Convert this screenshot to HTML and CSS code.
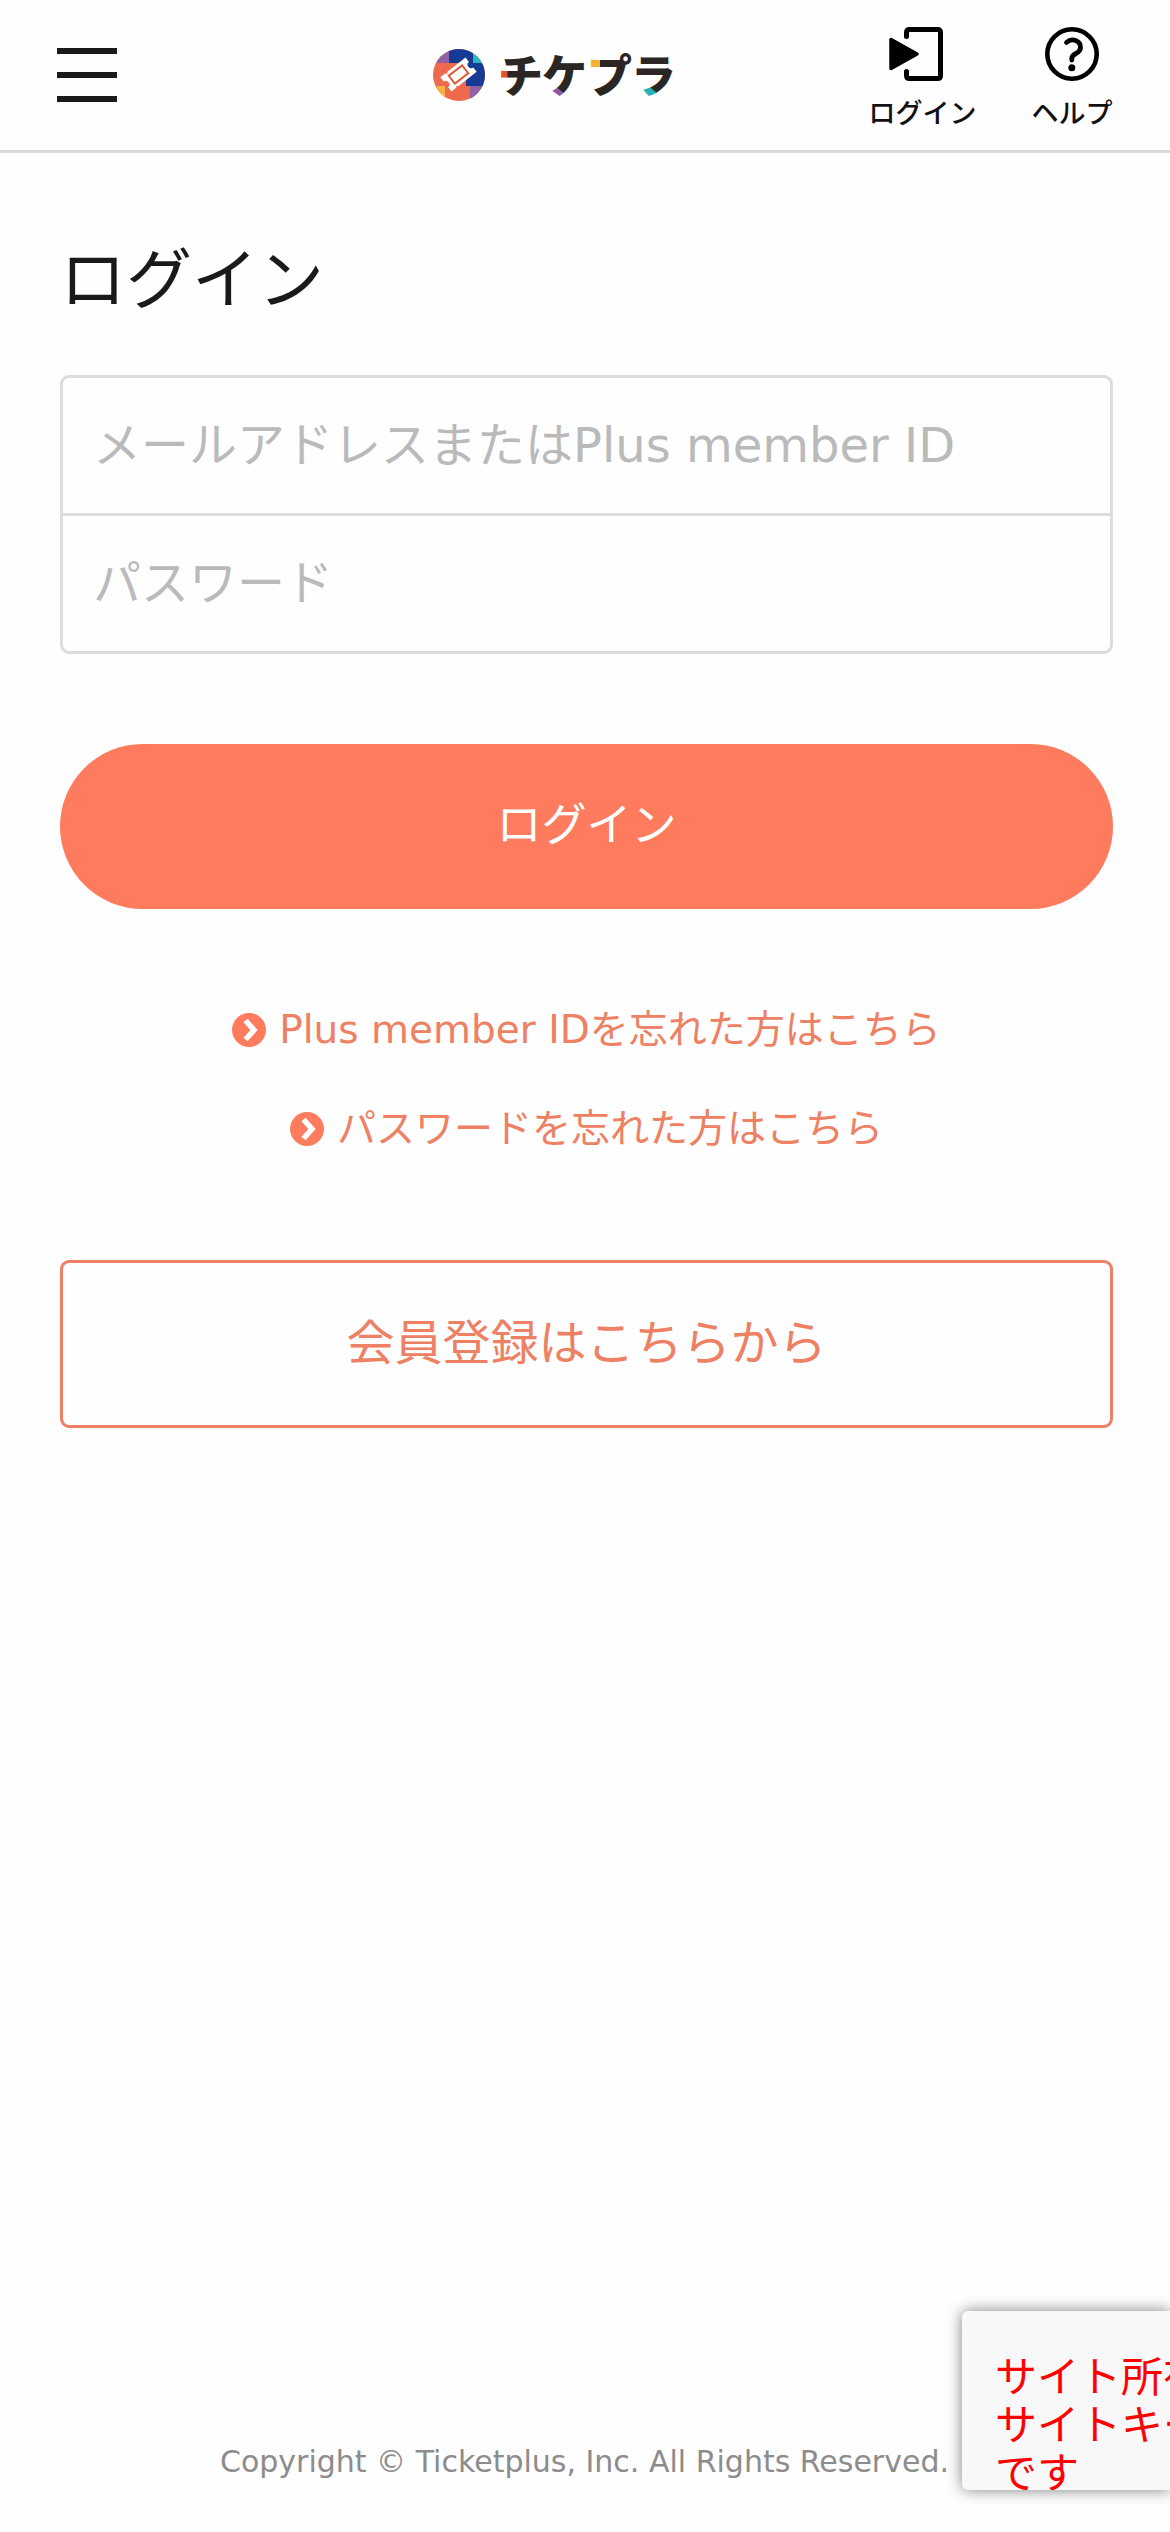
FILE: index.html
```html
<!DOCTYPE html>
<html lang="ja">
<head>
<meta charset="utf-8">
<title>ログイン | チケプラ</title>
<link rel="stylesheet" href="styles.css">
</head>
<body>
<header class="header">
  <button class="menu" aria-label="メニュー"><span></span><span></span><span></span></button>
  <a class="logo" href="#" aria-label="チケプラ">
    <svg width="250" height="60" viewBox="0 0 250 60">
      <defs>
        <clipPath id="disc"><circle cx="29" cy="30" r="26"/></clipPath>
        <pattern id="tips" patternUnits="userSpaceOnUse" width="260" height="80">
          <rect width="260" height="80" fill="#2b2523"/>
          <rect x="64" y="23" width="13.500" height="12" fill="#e4502b"/>
          <path d="M110 40H124L136 50V60H110Z" fill="#8c5aa2"/>
          <rect x="156" y="8" width="14" height="16" fill="#f3b13c"/>
          <path d="M202 38H215L228 49V60H202Z" fill="#27b3b6"/>
        </pattern>
      </defs>
      <g clip-path="url(#disc)">
        <rect x="3" y="4" width="52" height="52" fill="#ed6a4c"/>
        <rect x="19" y="4" width="24" height="14" fill="#173a94"/>
        <rect x="36" y="18" width="19" height="23" fill="#173a94"/>
        <rect x="3" y="4" width="16" height="14" fill="#9062a5"/>
        <rect x="43" y="4" width="12" height="14" fill="#2cb8bc"/>
        <rect x="3" y="41" width="12" height="15" fill="#f5b244"/>
        <rect x="40" y="41" width="15" height="15" fill="#9062a5"/>
      </g>
      <g transform="translate(28.5 29.5) rotate(-38)">
        <path d="M-16 -9H-10L-8.500 -7.500L-7 -9H16V-3.500A3.500 3.500 0 0 0 16 3.500V9H-7L-8.500 7.500L-10 9H-16V3.500A3.500 3.500 0 0 0 -16 -3.500Z" fill="#fff"/>
        <rect x="-8.500" y="-5" width="17" height="10" fill="#fff" stroke="#dc5a3b" stroke-width="2"/>
      </g>
      <text class="logo-text" y="47.500" x="68 112 157 201">チケプラ</text>
    </svg>
  </a>
  <nav class="tools">
    <a class="tool" href="#">
      <svg width="54" height="54" viewBox="0 0 54 54">
        <path d="M17.500 9.500V5.500Q17.500 2.500 20.500 2.500H48.500Q51.500 2.500 51.500 5.500V48.500Q51.500 51.500 48.500 51.500H20.500Q17.500 51.500 17.500 48.500V44.500" fill="none" stroke="#000" stroke-width="5" stroke-linecap="round"/>
        <path d="M2 12.500V41.500L28 27Z" fill="#000" stroke="#000" stroke-width="3.500" stroke-linejoin="round"/>
      </svg>
      <span>ログイン</span>
    </a>
    <a class="tool tool-help" href="#">
      <svg width="54" height="54" viewBox="0 0 54 54" fill="none" stroke="#000">
        <circle cx="27" cy="27" r="24.700" stroke-width="4.600"/>
        <path d="M21.500 15.500C27 10.500 35.500 13.500 35.500 20.500C35.500 27.500 26.800 25.500 26.800 31.500V33" stroke-width="4.800" stroke-linecap="round"/>
        <circle cx="26.800" cy="40.700" r="3.500" fill="#000" stroke="none"/>
      </svg>
      <span>ヘルプ</span>
    </a>
  </nav>
</header>
<main class="main">
  <h1 class="title">ログイン</h1>
  <form class="form">
    <div class="fields">
      <input class="field" type="text" placeholder="メールアドレスまたはPlus member ID">
      <input class="field" type="password" placeholder="パスワード">
    </div>
    <button class="submit" type="button">ログイン</button>
  </form>
  <div class="links">
    <a class="link" href="#"><svg class="arrow" viewBox="0 0 34 34"><circle cx="17" cy="17" r="17"/><path d="M13.500 7.500L22 17L13.500 26.500"/></svg>Plus member IDを忘れた方はこちら</a>
    <a class="link" href="#"><svg class="arrow" viewBox="0 0 34 34"><circle cx="17" cy="17" r="17"/><path d="M13.500 7.500L22 17L13.500 26.500"/></svg>パスワードを忘れた方はこちら</a>
  </div>
  <a class="register" href="#">会員登録はこちらから</a>
</main>
<footer class="footer">Copyright © Ticketplus, Inc. All Rights Reserved.</footer>
<aside class="badge"><p class="badge-text">サイト所有<br>サイトキー<br>です</p></aside>
</body>
</html>
```
FILE: styles.css
```css
* { box-sizing: border-box; }
body {
  margin: 0;
  height: 2532px;
  display: flex;
  flex-direction: column;
  position: relative;
  overflow: hidden;
  background: #fefefe;
  color: #1a1a1a;
  font-family: "DejaVu Sans", "Noto Sans CJK JP", sans-serif;
}
a { text-decoration: none; color: inherit; }
button, input { font-family: inherit; border: 0; padding: 0; }
.header {
  height: 153px;
  flex: none;
  display: flex;
  align-items: flex-start;
  padding-left: 57px;
  border-bottom: 3px solid #dadada;
}
.menu {
  width: 60px;
  margin-top: 48px;
  display: flex;
  flex-direction: column;
  gap: 18px;
  background: none;
}
.menu span { height: 6px; width: 60px; background: #1a1a1a; }
.logo { margin: 45px 0 0 313px; height: 60px; }
.logo svg { display: block; overflow: visible; }
.logo-text {
  font: 900 45px "Noto Sans CJK JP", sans-serif;
  fill: url(#tips);
}
.tools { display: flex; margin: 27px 0 0 185px; gap: 50px; }
.tool {
  width: 115px;
  display: flex;
  flex-direction: column;
  align-items: center;
  font: 500 27px/40px "Noto Sans CJK JP", sans-serif;
  color: #111;
}
.tool span { margin-top: 11px; }
.tool svg { display: block; margin-right: 14px; }
.tool-help { width: 84px; }
.tool-help svg { margin-right: 0; }
.main { padding: 0 57px 0 60px; }
.title {
  margin: 80px 0 0;
  font-size: 66px;
  line-height: 96px;
  font-weight: 400;
}
.fields {
  margin-top: 46px;
  height: 279px;
  border: 3px solid #dcdcdc;
  border-radius: 9px;
  display: flex;
  flex-direction: column;
}
.field {
  display: block;
  width: 100%;
  height: 135px;
  padding: 0 30px 2px;
  background: transparent;
  font-size: 48px;
}
.field + .field { border-top: 3px solid #dcdcdc; height: 138px; }
.field::placeholder { color: #bababa; opacity: 1; }
.submit {
  display: block;
  width: 100%;
  height: 165px;
  margin-top: 90px;
  padding-bottom: 11px;
  border-radius: 83px;
  background: #ff7b5e;
  color: #fff;
  font-size: 45px;
}
.links {
  margin-top: 91px;
  display: flex;
  flex-direction: column;
  align-items: center;
  gap: 39px;
  color: #ee8064;
}
.link { display: flex; align-items: center; font-size: 39px; line-height: 60px; }
.arrow { width: 34px; height: 34px; margin-right: 13px; fill: #ff7b5e; }
.arrow path { fill: none; stroke: #fff; stroke-width: 5.5; }
.register {
  display: flex;
  align-items: center;
  justify-content: center;
  height: 168px;
  margin-top: 101px;
  padding-bottom: 11px;
  border: 3px solid #ee8064;
  border-radius: 9px;
  color: #ee8064;
  font-size: 48px;
}
.footer {
  margin-top: auto;
  padding: 0 0 50px 220px;
  font-size: 30px;
  line-height: 40px;
  color: #8c8c8c;
}
/* badge pinned to the corner, cut by the right edge */
.badge {
  position: absolute;
  right: 0;
  top: 2311px;
  width: 208px;
  height: 179px;
  overflow: hidden;
  border-radius: 6px 0 0 6px;
  background: #f8f8f8;
  box-shadow: 0 0 15px #808080;
}
.badge-text {
  margin: 39px 0 0 33px;
  color: #ff0000;
  font: 42px/48px "Noto Sans CJK JP", sans-serif;
  white-space: nowrap;
}
```
